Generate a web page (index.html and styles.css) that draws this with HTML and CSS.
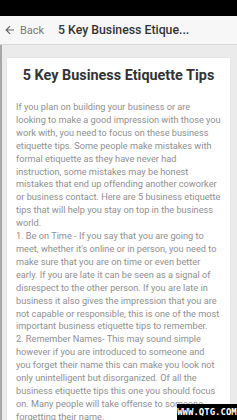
FILE: index.html
```html
<!DOCTYPE html>
<html>
<head>
<meta charset="utf-8">
<link rel="stylesheet" href="styles.css">
</head>
<body>
<div class="status"></div>
<header class="bar">
  <div class="back">
    <svg class="arrow" width="10" height="10" viewBox="0 0 10 10"><path d="M9 5H1.5M5 1.2L1.2 5L5 8.8" fill="none" stroke="#666" stroke-width="1.2"/></svg>
    <span>Back</span>
  </div>
  <div class="title">5 Key Business Etique...</div>
</header>
<main class="content">
  <article class="card">
    <h1>5 Key Business Etiquette Tips</h1>
    <p>If you plan on building your business or are looking to make a good impression with those you work with, you need to focus on these business etiquette tips. Some people make mistakes with formal etiquette as they have never had instruction, some mistakes may be honest mistakes that end up offending another coworker or business contact. Here are 5 business etiquette tips that will help you stay on top in the business world.</p>
    <p>1. Be on Time - If you say that you are going to meet, whether it's online or in person, you need to make sure that you are on time or even better early. If you are late it can be seen as a signal of disrespect to the other person. If you are late in business it also gives the impression that you are not capable or responsible, this is one of the most important business etiquette tips to remember.</p>
    <p>2. Remember Names- This may sound simple however if you are introduced to someone and you forget their name this can make you look not only unintelligent but disorganized. Of all the business etiquette tips this one you should focus on. Many people will take offense to someone forgetting their name.</p>
  </article>
</main>
<div class="watermark">WWW.QTG.COM</div>
</body>
</html>
```
FILE: styles.css
```css
html, body {
  margin: 0;
  padding: 0;
  height: 420px;
  overflow: hidden;
  background: #ebebeb;
  font-family: Roboto, "Liberation Sans", sans-serif;
}
.status {
  height: 16px;
  background: #000;
}
.bar {
  height: 28px;
  background: #f7f7f7;
  border-bottom: 1px solid #d8d8d8;
  display: flex;
  align-items: center;
  padding-left: 5px;
}
.back {
  display: flex;
  align-items: center;
  gap: 5px;
  color: #777;
  font-size: 11px;
  width: 53px;
}
.arrow { display: block; }
.title {
  color: #333;
  font-size: 12.3px;
  font-weight: 500;
}
.content {
  border-left: 2px solid #a8a8a8;
  padding: 13px 7px 0 5px;
  height: 400px;
}
.card {
  background: #fff;
  padding: 8px 9px 0 9px;
  box-shadow: 0 0 1px rgba(0,0,0,0.15);
  height: 400px;
}
.card h1 {
  margin: 0 0 15px 0;
  text-align: center;
  font-size: 14.4px;
  font-weight: 700;
  color: #333;
  line-height: 20px;
  white-space: nowrap;
}
.card p {
  margin: 0;
  font-size: 9.2px;
  line-height: 12.9px;
  color: #8f8f8f;
}
.watermark {
  position: absolute;
  right: 0;
  top: 404px;
  width: 60px;
  height: 16px;
  background: #000;
  color: #fff;
  font-family: "DejaVu Sans Mono", monospace;
  font-weight: 700;
  font-size: 9px;
  line-height: 16px;
  text-align: center;
}
```
